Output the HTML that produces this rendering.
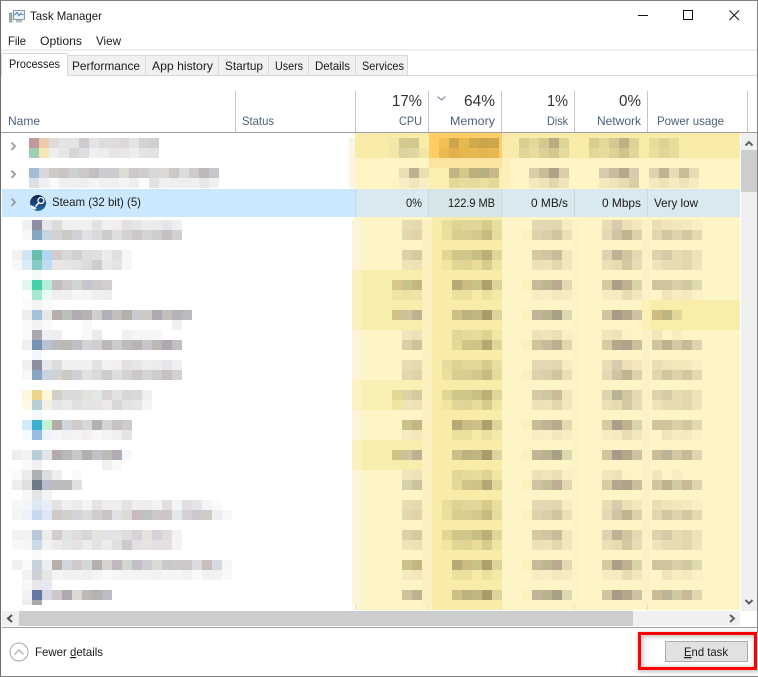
<!DOCTYPE html>
<html><head><meta charset="utf-8"><style>
html,body{margin:0;padding:0;background:#fff;overflow:hidden}
svg{display:block;font-family:"Liberation Sans",sans-serif;font-size:12px}
g.m rect{width:10px;height:10px}
.h{fill:#4c607a}
.r{text-anchor:end}
.b{font-size:16px;fill:#333;text-anchor:end}
.k{fill:#1a1a1a}
</style></head><body>
<svg width="758" height="677" viewBox="0 0 758 677" xmlns="http://www.w3.org/2000/svg">
<defs>
<filter id="bl" x="-10%" y="-30%" width="120%" height="160%"><feGaussianBlur stdDeviation="2.5"/></filter>
<linearGradient id="st" x1="0" y1="0" x2="0" y2="1"><stop offset="0" stop-color="#11224c"/><stop offset=".55" stop-color="#1a4a80"/><stop offset="1" stop-color="#1f6ea6"/></linearGradient>
<g id="L1" class="m">
<rect x="22" fill="#f0f0f3"/><rect x="32" fill="#8c8fa1"/><rect x="42" fill="#e6e7ea"/><rect x="52" fill="#dcdcdc"/><rect x="62" fill="#f1f0ee"/><rect x="72" fill="#f0f0ee"/><rect x="82" fill="#f0f0ee"/><rect x="92" fill="#e2e2e6"/><rect x="102" fill="#f2f0f0"/><rect x="112" fill="#f0eeee"/><rect x="122" fill="#e5e0df"/><rect x="132" fill="#e6e6ea"/><rect x="142" fill="#eeecec"/><rect x="152" fill="#ecebeb"/><rect x="162" fill="#e8e5ea"/><rect x="172" fill="#efefef"/>
<rect x="22" y="10" fill="#f6f7f9"/><rect x="32" y="10" fill="#86a6c2"/><rect x="42" y="10" fill="#c8d5e0"/><rect x="52" y="10" fill="#d2d2d2"/><rect x="62" y="10" fill="#c9c9c5"/><rect x="72" y="10" fill="#d2d0d6"/><rect x="82" y="10" fill="#e2e0e2"/><rect x="92" y="10" fill="#dcd9dd"/><rect x="102" y="10" fill="#ccccca"/><rect x="112" y="10" fill="#e0dde1"/><rect x="122" y="10" fill="#d4d3d3"/><rect x="132" y="10" fill="#ccc8c9"/><rect x="142" y="10" fill="#d6d3d4"/><rect x="152" y="10" fill="#cfcdca"/><rect x="162" y="10" fill="#c6c0c4"/><rect x="172" y="10" fill="#d2d0d5"/>
</g>
<g id="A" class="m">
<rect x="402" fill="#e8ddb0"/><rect x="412" fill="#e4dab0"/><rect x="442" fill="#e8dc9e"/><rect x="452" fill="#dfd394"/><rect x="462" fill="#e2d698"/><rect x="472" fill="#e2d698"/><rect x="482" fill="#d8cc88"/><rect x="492" fill="#e8dea0"/><rect x="532" fill="#e2d8b4"/><rect x="542" fill="#e0d9b2"/><rect x="552" fill="#e2d6ac"/><rect x="562" fill="#f4edc0"/><rect x="602" fill="#e8deb4"/><rect x="612" fill="#d8ccac"/><rect x="622" fill="#eee0b4"/><rect x="632" fill="#f2e8bc"/><rect x="652" fill="#eadfb4"/><rect x="662" fill="#efe5b6"/><rect x="672" fill="#f2e7b8"/><rect x="682" fill="#f2e9bc"/><rect x="692" fill="#f8efc4"/>
<rect x="402" y="10" fill="#e2d8ae"/><rect x="412" y="10" fill="#dfd3a8"/><rect x="442" y="10" fill="#eadf9c"/><rect x="452" y="10" fill="#d9cd90"/><rect x="462" y="10" fill="#d8cc90"/><rect x="472" y="10" fill="#d4c98c"/><rect x="482" y="10" fill="#c6bb80"/><rect x="492" y="10" fill="#e6dc9c"/><rect x="522" y="10" fill="#fdf0c0"/><rect x="532" y="10" fill="#dcd2ac"/><rect x="542" y="10" fill="#d8d1a8"/><rect x="552" y="10" fill="#cfc59f"/><rect x="562" y="10" fill="#eae0b4"/><rect x="602" y="10" fill="#e2dab0"/><rect x="612" y="10" fill="#cfc3a4"/><rect x="622" y="10" fill="#c1b591"/><rect x="632" y="10" fill="#dad2a8"/><rect x="652" y="10" fill="#e4d6ac"/><rect x="662" y="10" fill="#d0c7a0"/><rect x="672" y="10" fill="#dcd4ac"/><rect x="682" y="10" fill="#d4c89f"/><rect x="692" y="10" fill="#e2dab0"/>
</g>
<g id="B" class="m">
<rect x="402" fill="#dcd2a8"/><rect x="412" fill="#d4cba0"/><rect x="442" fill="#e2d694"/><rect x="452" fill="#cfc68a"/><rect x="462" fill="#cfc68a"/><rect x="472" fill="#c8bf84"/><rect x="482" fill="#bcb078"/><rect x="492" fill="#e0d698"/><rect x="532" fill="#d4caa4"/><rect x="542" fill="#cdc8a0"/><rect x="552" fill="#c8bd98"/><rect x="562" fill="#eee6ba"/><rect x="602" fill="#dcd4ac"/><rect x="612" fill="#bcb294"/><rect x="622" fill="#d2c6a0"/><rect x="632" fill="#e2dab0"/><rect x="652" fill="#ded2ac"/><rect x="662" fill="#d4caa4"/><rect x="672" fill="#e6dcb2"/><rect x="682" fill="#e2d8ae"/><rect x="692" fill="#ece4b8"/>
<rect x="402" y="10" fill="#eee4b6"/><rect x="412" y="10" fill="#ece2b4"/><rect x="442" y="10" fill="#f2e69e"/><rect x="452" y="10" fill="#e2d696"/><rect x="462" y="10" fill="#e0d494"/><rect x="472" y="10" fill="#e8dc98"/><rect x="482" y="10" fill="#d6cc8c"/><rect x="492" y="10" fill="#f0e6a4"/><rect x="532" y="10" fill="#ece2b8"/><rect x="542" y="10" fill="#eae4b6"/><rect x="552" y="10" fill="#e2d8ae"/><rect x="562" y="10" fill="#f0e8bc"/><rect x="602" y="10" fill="#eae2b6"/><rect x="612" y="10" fill="#e6dcb2"/><rect x="622" y="10" fill="#d4c8a2"/><rect x="632" y="10" fill="#e4dcb2"/><rect x="652" y="10" fill="#eee4b8"/><rect x="662" y="10" fill="#e6dcb2"/><rect x="672" y="10" fill="#e6dcb2"/><rect x="682" y="10" fill="#e2d8ae"/><rect x="692" y="10" fill="#eee6ba"/>
</g>
<g id="C" class="m">
<rect x="402" fill="#c8c28c"/><rect x="412" fill="#c4b680"/><rect x="452" fill="#b8aa74"/><rect x="462" fill="#ccbc84"/><rect x="472" fill="#ccc288"/><rect x="482" fill="#aca06c"/><rect x="492" fill="#dcd498"/><rect x="522" fill="#fcf0bc"/><rect x="532" fill="#c8bb98"/><rect x="542" fill="#bcb690"/><rect x="552" fill="#b8aa8c"/><rect x="562" fill="#e2dab0"/><rect x="602" fill="#d4cca0"/><rect x="612" fill="#ac9e88"/><rect x="622" fill="#c0b290"/><rect x="632" fill="#dad2a8"/><rect x="652" fill="#d0c49c"/><rect x="662" fill="#d0c49c"/><rect x="672" fill="#dad0a8"/><rect x="682" fill="#d2c8a0"/><rect x="692" fill="#e0d8ae"/>
<rect x="402" y="10" fill="#f4ecc0"/><rect x="412" y="10" fill="#f2e8bc"/><rect x="452" y="10" fill="#ece09e"/><rect x="462" y="10" fill="#ece09e"/><rect x="472" y="10" fill="#f6eaa6"/><rect x="482" y="10" fill="#eae0a0"/><rect x="492" y="10" fill="#f2e8a8"/><rect x="532" y="10" fill="#f6eec2"/><rect x="542" y="10" fill="#f8f0c4"/><rect x="552" y="10" fill="#f2e8bc"/><rect x="562" y="10" fill="#f6ecc0"/><rect x="602" y="10" fill="#f6eec2"/><rect x="612" y="10" fill="#f4ecc0"/><rect x="622" y="10" fill="#e8dcb2"/><rect x="632" y="10" fill="#f0e8bc"/><rect x="662" y="10" fill="#f0e4ba"/><rect x="672" y="10" fill="#f6ecc0"/><rect x="682" y="10" fill="#f4eabe"/><rect x="692" y="10" fill="#faf2c6"/>
</g>
<g id="D2" class="m">
<rect x="402" fill="#ccc29c"/><rect x="412" fill="#bcb290"/><rect x="452" fill="#ccc088"/><rect x="462" fill="#bcb27c"/><rect x="472" fill="#c0b684"/><rect x="482" fill="#a89c6c"/><rect x="492" fill="#dcd49c"/><rect x="522" fill="#fcf0bc"/><rect x="532" fill="#c2b496"/><rect x="542" fill="#b8b290"/><rect x="552" fill="#ac9f88"/><rect x="562" fill="#dedab0"/><rect x="602" fill="#cec69c"/><rect x="612" fill="#a89c88"/><rect x="622" fill="#b4a888"/><rect x="632" fill="#cac2a0"/>
</g>
<g id="P5" class="m"><rect x="652" fill="#ccbc98"/><rect x="662" fill="#bcb494"/><rect x="672" fill="#d0c8a0"/><rect x="682" fill="#c8ba98"/><rect x="692" fill="#ded6ae"/></g>
<g id="E" class="m">
<rect x="402" fill="#f0e6bc"/><rect x="412" fill="#ece2b8"/><rect x="452" fill="#e2d696"/><rect x="462" fill="#e6da9a"/><rect x="472" fill="#e6dc9c"/><rect x="482" fill="#e0d290"/><rect x="492" fill="#f2e6a4"/><rect x="532" fill="#ece2b8"/><rect x="542" fill="#eee6ba"/><rect x="552" fill="#eae0b4"/><rect x="562" fill="#f8f0c4"/><rect x="602" fill="#f0e8bc"/><rect x="612" fill="#ece4b8"/><rect x="622" fill="#fcf2c6"/><rect x="652" fill="#f0e8bc"/><rect x="672" fill="#f6eec0"/>
<rect x="402" y="10" fill="#d8d0a8"/><rect x="412" y="10" fill="#ccc29c"/><rect x="452" y="10" fill="#e4da98"/><rect x="462" y="10" fill="#d2c488"/><rect x="472" y="10" fill="#cec486"/><rect x="482" y="10" fill="#b4a874"/><rect x="492" y="10" fill="#e0d698"/><rect x="522" y="10" fill="#fcf0bc"/><rect x="532" y="10" fill="#cec4a0"/><rect x="542" y="10" fill="#c4be98"/><rect x="552" y="10" fill="#bcae90"/><rect x="562" y="10" fill="#e0d8ae"/><rect x="602" y="10" fill="#d6cea2"/><rect x="612" y="10" fill="#b4a88c"/><rect x="622" y="10" fill="#b0a488"/><rect x="632" y="10" fill="#c8c09a"/><rect x="652" y="10" fill="#d2c49e"/><rect x="662" y="10" fill="#bcb28e"/><rect x="672" y="10" fill="#d2caa2"/><rect x="682" y="10" fill="#c8ba96"/><rect x="692" y="10" fill="#dcd4ac"/>
</g>
</defs>

<rect x="0" y="0" width="758" height="677" fill="#fff"/>

<!-- title -->
<g>
<rect x="13.500" y="10.500" width="11" height="9" fill="#e8f0f8" stroke="#8c9aa4"/>
<polyline points="14.500,15 17,12.500 19,15.500 21,13.500 23.500,15" fill="none" stroke="#3a7ab0" stroke-width="1"/>
<rect x="9.500" y="13" width="2.500" height="9" fill="#9fb0a0" stroke="#7a8a80" stroke-width=".6"/>
<rect x="16" y="20" width="6" height="2.500" fill="#b8bcc0"/>
</g>
<text x="30" y="20" fill="#1a1a1a" textLength="72" lengthAdjust="spacingAndGlyphs">Task Manager</text>
<rect x="638" y="15" width="10" height="1" fill="#111"/>
<rect x="683.500" y="10.500" width="9" height="9" fill="none" stroke="#111"/>
<path d="M729.500 10.500L739 20M739 10.500L729.500 20" stroke="#111" fill="none" stroke-width="1"/>

<!-- menu -->
<text x="8" y="45" class="k" textLength="18" lengthAdjust="spacingAndGlyphs">File</text><text x="40" y="45" class="k" textLength="42" lengthAdjust="spacingAndGlyphs">Options</text><text x="96" y="45" class="k" textLength="25" lengthAdjust="spacingAndGlyphs">View</text>
<rect x="1" y="49" width="756" height="2" fill="#f0f0f0"/>

<!-- tabs -->
<rect x="1" y="75" width="756" height="1" fill="#d9d9d9"/>
<g fill="#f0f0f0" stroke="#d9d9d9">
<rect x="67.500" y="55.500" width="78" height="20"/><rect x="145.500" y="55.500" width="73" height="20"/><rect x="218.500" y="55.500" width="50" height="20"/><rect x="268.500" y="55.500" width="40" height="20"/><rect x="308.500" y="55.500" width="47" height="20"/><rect x="355.500" y="55.500" width="52" height="20"/>
</g>
<path d="M1.500 76V53.500H67.500V76" fill="#fff" stroke="#d9d9d9"/>
<rect x="2" y="75" width="65" height="2" fill="#fff"/>
<text x="9" y="68" class="k" textLength="51" lengthAdjust="spacingAndGlyphs">Processes</text>
<g class="k"><text x="72" y="70" textLength="68" lengthAdjust="spacingAndGlyphs">Performance</text><text x="152" y="70" textLength="61" lengthAdjust="spacingAndGlyphs">App history</text><text x="225" y="70" textLength="38" lengthAdjust="spacingAndGlyphs">Startup</text><text x="275" y="70" textLength="28" lengthAdjust="spacingAndGlyphs">Users</text><text x="315" y="70" textLength="35" lengthAdjust="spacingAndGlyphs">Details</text><text x="362" y="70" textLength="42" lengthAdjust="spacingAndGlyphs">Services</text></g>

<!-- header -->
<rect x="1" y="132" width="756" height="1" fill="#a0a0a0"/>
<g fill="#c6c6c6"><rect x="235" y="91" width="1" height="41"/><rect x="355" y="91" width="1" height="41"/><rect x="428" y="91" width="1" height="41"/><rect x="501" y="91" width="1" height="41"/><rect x="574" y="91" width="1" height="41"/><rect x="647" y="91" width="1" height="41"/><rect x="747" y="91" width="1" height="41"/></g>
<text x="392" y="106" style="font-size:16px;fill:#333" textLength="30" lengthAdjust="spacingAndGlyphs">17%</text><text x="464" y="106" style="font-size:16px;fill:#333" textLength="31" lengthAdjust="spacingAndGlyphs">64%</text><text x="547" y="106" style="font-size:16px;fill:#333" textLength="21" lengthAdjust="spacingAndGlyphs">1%</text><text x="619" y="106" style="font-size:16px;fill:#333" textLength="22" lengthAdjust="spacingAndGlyphs">0%</text>
<path d="M437.500 96.500L441.500 100L445.500 96.500" fill="none" stroke="#6a7a90" stroke-width="1"/>
<text x="8" y="125" class="h" textLength="32" lengthAdjust="spacingAndGlyphs">Name</text><text x="242" y="125" class="h" textLength="32" lengthAdjust="spacingAndGlyphs">Status</text>
<text x="399" y="125" class="h" textLength="23" lengthAdjust="spacingAndGlyphs">CPU</text><text x="450" y="125" class="h" textLength="45" lengthAdjust="spacingAndGlyphs">Memory</text><text x="547" y="125" class="h" textLength="21" lengthAdjust="spacingAndGlyphs">Disk</text><text x="597" y="125" class="h" textLength="44" lengthAdjust="spacingAndGlyphs">Network</text><text x="657" y="125" class="h" textLength="67" lengthAdjust="spacingAndGlyphs">Power usage</text>

<!-- yellow columns -->
<rect x="349" y="138" width="10" height="50" fill="#faf4e0"/>
<rect x="355" y="133" width="385" height="56" fill="#fef4c4"/>
<rect x="355" y="133" width="385" height="25" fill="#f8eca8"/>
<rect x="429" y="133" width="73" height="25" fill="#fece64"/>
<rect x="429" y="158" width="73" height="31" fill="#faeeb0"/>
<rect x="429" y="158" width="73" height="10" fill="#fae4a0"/>
<rect x="502" y="133" width="8" height="55" fill="#fbeab0" opacity=".5"/>

<rect x="352" y="220" width="388" height="385" fill="#fef5c6"/>
<rect x="355" y="605" width="385" height="5" fill="#fef5c6"/>
<rect x="352" y="220" width="10" height="385" fill="#fdf3d6"/>
<rect x="355" y="217" width="385" height="3" fill="#fef5c6"/>
<rect x="362" y="270" width="67" height="60" fill="#f8eeac"/>
<rect x="352" y="270" width="10" height="60" fill="#faf0c0"/>
<rect x="362" y="380" width="67" height="30" fill="#f9f0b4"/>
<rect x="352" y="380" width="10" height="30" fill="#fbf2c4"/>
<rect x="362" y="440" width="67" height="30" fill="#f8eeac"/>
<rect x="352" y="440" width="10" height="30" fill="#faf0c0"/>
<rect x="422" y="220" width="10" height="385" fill="#fcf0c0"/>
<rect x="432" y="217" width="70" height="393" fill="#f8eca8"/>
<rect x="572" y="220" width="8" height="385" fill="#fdf2c6"/>
<rect x="642" y="220" width="8" height="385" fill="#fcf1c6"/>
<rect x="650" y="300" width="90" height="30" fill="#f9edaa"/>
<rect x="642" y="300" width="8" height="30" fill="#faf0b8"/>
<g fill="#e6ddb0"><rect x="355" y="605" width="1" height="5"/><rect x="428" y="605" width="1" height="5"/><rect x="501" y="605" width="1" height="5"/><rect x="574" y="605" width="1" height="5"/><rect x="647" y="605" width="1" height="5"/></g>

<!-- right mosaics -->
<use href="#A" y="220"/><use href="#B" y="250"/><use href="#C" y="280"/><use href="#D2" y="310"/><use href="#E" y="330"/>
<use href="#A" y="360"/><use href="#B" y="390"/><use href="#C" y="420"/><use href="#D2" y="450"/><use href="#P5" y="450"/><use href="#E" y="470"/>
<use href="#A" y="500"/><use href="#B" y="530"/><use href="#C" y="560"/><use href="#D2" y="590"/><use href="#P5" y="590"/>
<g class="m">
<rect x="392" y="280" fill="#d8c88a"/><rect x="392" y="290" fill="#f0e4a4"/><rect x="402" y="290" fill="#ece2a4"/><rect x="412" y="290" fill="#ece4a8"/>
<rect x="392" y="310" fill="#d2c288"/>
<rect x="652" y="310" fill="#cebc84"/><rect x="662" y="310" fill="#bfb580"/><rect x="672" y="310" fill="#e0d698"/>
<rect x="392" y="390" fill="#e4d896"/><rect x="392" y="400" fill="#f0e4a2"/>
<rect x="392" y="450" fill="#d2c288"/>
</g>

<!-- top right mosaic -->
<g class="m">
<rect x="389" y="138" fill="#f2e7a6"/><rect x="399" y="138" fill="#d4c98f"/><rect x="409" y="138" fill="#d0c88c"/>
<rect x="389" y="148" fill="#f2e7a6"/><rect x="399" y="148" fill="#ddd29e"/><rect x="409" y="148" fill="#e0d6a0"/><rect x="419" y="148" fill="#f0e6a6"/>
<rect x="439" y="138" fill="#f0bf56"/><rect x="449" y="138" fill="#cda54c"/><rect x="459" y="138" fill="#e8b84f"/><rect x="469" y="138" fill="#d2a84e"/><rect x="479" y="138" fill="#cca44b"/><rect x="489" y="138" fill="#cea64c"/>
<rect x="439" y="148" fill="#ecba52"/><rect x="449" y="148" fill="#e4b04b"/><rect x="459" y="148" fill="#e6b64f"/><rect x="469" y="148" fill="#e8b854"/><rect x="479" y="148" fill="#e4b452"/><rect x="489" y="148" fill="#e8b854"/>
<rect x="519" y="138" fill="#d8ce90"/><rect x="529" y="138" fill="#e2d898"/><rect x="539" y="138" fill="#d4c88e"/><rect x="549" y="138" fill="#b8ac80"/><rect x="559" y="138" fill="#dcd494"/>
<rect x="519" y="148" fill="#e0d698"/><rect x="529" y="148" fill="#e6dc9c"/><rect x="539" y="148" fill="#dcd098"/><rect x="549" y="148" fill="#d4c890"/><rect x="559" y="148" fill="#e4dc9c"/>
<rect x="589" y="138" fill="#d8ce90"/><rect x="599" y="138" fill="#e2d898"/><rect x="609" y="138" fill="#d4c88e"/><rect x="619" y="138" fill="#bcb084"/><rect x="629" y="138" fill="#dcd494"/>
<rect x="589" y="148" fill="#e2d898"/><rect x="599" y="148" fill="#e6dc9c"/><rect x="609" y="148" fill="#dcd294"/><rect x="619" y="148" fill="#cfc48c"/><rect x="629" y="148" fill="#e0d698"/>
<rect x="649" y="138" fill="#e6dc9c"/><rect x="659" y="138" fill="#dcd296"/><rect x="669" y="138" fill="#e6dc9c"/>
<rect x="649" y="148" fill="#ecdf9e"/><rect x="659" y="148" fill="#e0d698"/><rect x="669" y="148" fill="#e6dc9c"/>
<rect x="399" y="168" fill="#e8e0b4"/><rect x="409" y="168" fill="#bdb28f"/><rect x="419" y="168" fill="#eadfb0"/>
<rect x="399" y="178" fill="#f6eec4"/><rect x="409" y="178" fill="#efe6bc"/><rect x="419" y="178" fill="#f6eec4"/>
<rect x="449" y="168" fill="#c2b480"/><rect x="459" y="168" fill="#d4c98a"/><rect x="469" y="168" fill="#c0b080"/><rect x="479" y="168" fill="#b4b080"/><rect x="489" y="168" fill="#c6ba88"/>
<rect x="449" y="178" fill="#e2d898"/><rect x="459" y="178" fill="#e6dc9c"/><rect x="469" y="178" fill="#e4da9a"/><rect x="479" y="178" fill="#eadf9f"/><rect x="489" y="178" fill="#e2d898"/>
<rect x="529" y="168" fill="#d8d0a8"/><rect x="539" y="168" fill="#c8bd98"/><rect x="549" y="168" fill="#b0a088"/><rect x="559" y="168" fill="#d8d0a8"/>
<rect x="529" y="178" fill="#f2eabc"/><rect x="539" y="178" fill="#eee4b8"/><rect x="549" y="178" fill="#e2d8ae"/><rect x="559" y="178" fill="#eee6ba"/>
<rect x="599" y="168" fill="#d4ccac"/><rect x="609" y="168" fill="#c8bd9c"/><rect x="619" y="168" fill="#b4a888"/><rect x="629" y="168" fill="#d4ccac"/>
<rect x="599" y="178" fill="#f2eabc"/><rect x="609" y="178" fill="#eee4b8"/><rect x="619" y="178" fill="#e6dcb2"/><rect x="629" y="178" fill="#d8ceaa"/>
<rect x="649" y="168" fill="#dcd4b0"/><rect x="659" y="168" fill="#c0b490"/><rect x="669" y="168" fill="#e4dcb4"/><rect x="679" y="168" fill="#c8bc98"/><rect x="689" y="168" fill="#e4dcb4"/>
<rect x="649" y="178" fill="#f2eabe"/><rect x="659" y="178" fill="#eee4b8"/><rect x="669" y="178" fill="#f4ecc0"/><rect x="679" y="178" fill="#eee4b8"/><rect x="689" y="178" fill="#f4ecc0"/>
</g>

<!-- left mosaics -->
<g class="m">
<rect x="29" y="138" fill="#c09a9a"/><rect x="39" y="138" fill="#eccbaa"/><rect x="49" y="138" fill="#e0dcdc"/><rect x="59" y="138" fill="#e4e4e4"/><rect x="69" y="138" fill="#e4e4e4"/><rect x="79" y="138" fill="#d0cace"/><rect x="89" y="138" fill="#e4e4e6"/><rect x="99" y="138" fill="#dcdcdc"/><rect x="109" y="138" fill="#dedcde"/><rect x="119" y="138" fill="#dcd8da"/><rect x="129" y="138" fill="#e2e3e5"/><rect x="139" y="138" fill="#d4d3d3"/><rect x="149" y="138" fill="#d0d1cf"/>
<rect x="29" y="148" fill="#a0cfb4"/><rect x="39" y="148" fill="#f4e8b4"/><rect x="49" y="148" fill="#eeeeee"/><rect x="59" y="148" fill="#e6e6e6"/><rect x="69" y="148" fill="#d8d6d4"/><rect x="79" y="148" fill="#dedde2"/><rect x="89" y="148" fill="#efefef"/><rect x="99" y="148" fill="#ededed"/><rect x="109" y="148" fill="#e6e4e6"/><rect x="119" y="148" fill="#e8e6e8"/><rect x="129" y="148" fill="#ecedef"/><rect x="139" y="148" fill="#e4e4e4"/><rect x="149" y="148" fill="#e2e2e2"/>
<rect x="29" y="168" fill="#a4bcd4"/><rect x="39" y="168" fill="#d8d8da"/><rect x="49" y="168" fill="#cecac8"/><rect x="59" y="168" fill="#ccc4c4"/><rect x="69" y="168" fill="#cdcfd2"/><rect x="79" y="168" fill="#cac8c8"/><rect x="89" y="168" fill="#c4bec2"/><rect x="99" y="168" fill="#cccdd2"/><rect x="109" y="168" fill="#cecacd"/><rect x="119" y="168" fill="#dcdcd6"/><rect x="129" y="168" fill="#ccc8ca"/><rect x="139" y="168" fill="#d0cccc"/><rect x="149" y="168" fill="#d8d8dc"/><rect x="159" y="168" fill="#dcd8d6"/><rect x="169" y="168" fill="#ccc8ca"/><rect x="179" y="168" fill="#dadcde"/><rect x="189" y="168" fill="#d0cccc"/><rect x="199" y="168" fill="#bcb8ba"/><rect x="209" y="168" fill="#c8c6cc"/>
<rect x="29" y="178" fill="#dae0e8"/><rect x="39" y="178" fill="#efefef"/><rect x="49" y="178" fill="#fafafa"/><rect x="59" y="178" fill="#f0f0f0"/><rect x="69" y="178" fill="#f0f0f0"/><rect x="79" y="178" fill="#eeeeee"/><rect x="89" y="178" fill="#f4f4f4"/><rect x="99" y="178" fill="#f0f0f0"/><rect x="109" y="178" fill="#f0f0f0"/><rect x="119" y="178" fill="#f4f4f4"/><rect x="129" y="178" fill="#eeeeee"/><rect x="139" y="178" fill="#fafafa"/><rect x="149" y="178" fill="#e2e2e2"/><rect x="159" y="178" fill="#f0f0ee"/><rect x="169" y="178" fill="#eeeeee"/><rect x="179" y="178" fill="#eeeeee"/><rect x="189" y="178" fill="#efefef"/><rect x="199" y="178" fill="#e8e8e8"/><rect x="209" y="178" fill="#f0f0f0"/>
</g>
<use href="#L1" y="220"/><use href="#L1" y="360"/>
<g class="m">
<rect x="12" y="250" fill="#f2f2f2"/><rect x="22" y="250" fill="#d0e4f4"/><rect x="32" y="250" fill="#68bfae"/><rect x="42" y="250" fill="#b0d6f0"/><rect x="52" y="250" fill="#d2ccca"/><rect x="62" y="250" fill="#d8d8d8"/><rect x="72" y="250" fill="#d0d0d0"/><rect x="82" y="250" fill="#dcdde0"/><rect x="92" y="250" fill="#e4dfdf"/><rect x="102" y="250" fill="#ececec"/><rect x="112" y="250" fill="#e0dfdf"/><rect x="122" y="250" fill="#f6f7fb"/>
<rect x="12" y="260" fill="#f8f8f8"/><rect x="22" y="260" fill="#dcebf6"/><rect x="32" y="260" fill="#86cbc8"/><rect x="42" y="260" fill="#c0dcf2"/><rect x="52" y="260" fill="#e8e6e6"/><rect x="62" y="260" fill="#e8e4e6"/><rect x="72" y="260" fill="#e2e2e2"/><rect x="82" y="260" fill="#dcdbda"/><rect x="92" y="260" fill="#d0ccce"/><rect x="102" y="260" fill="#e8e8ec"/><rect x="112" y="260" fill="#e4e4e4"/><rect x="122" y="260" fill="#f6f7fb"/>
<rect x="32" y="270" fill="#f2fafa"/>
<rect x="22" y="280" fill="#e2f5ef"/><rect x="32" y="280" fill="#46d0aa"/><rect x="42" y="280" fill="#b8ecdc"/><rect x="52" y="280" fill="#c6bebe"/><rect x="62" y="280" fill="#cecacc"/><rect x="72" y="280" fill="#d2d4d0"/><rect x="82" y="280" fill="#c8c4cc"/><rect x="92" y="280" fill="#cec9cb"/><rect x="102" y="280" fill="#d0cfce"/>
<rect x="22" y="290" fill="#fafefe"/><rect x="32" y="290" fill="#a8e8d2"/><rect x="42" y="290" fill="#ecfaf5"/><rect x="52" y="290" fill="#f0eeee"/><rect x="62" y="290" fill="#f1f0f0"/><rect x="72" y="290" fill="#f6f6f6"/><rect x="82" y="290" fill="#f5f4f5"/><rect x="92" y="290" fill="#f1f0f0"/><rect x="102" y="290" fill="#eeeeee"/>
<rect x="22" y="300" fill="#fafafa"/><rect x="32" y="300" fill="#f2f3f2"/><rect x="42" y="300" fill="#fafafa"/>
<rect x="22" y="310" fill="#eeeeee"/><rect x="32" y="310" fill="#a5c0d8"/><rect x="42" y="310" fill="#e6e8e8"/><rect x="52" y="310" fill="#b5aeac"/><rect x="62" y="310" fill="#bcc0ba"/><rect x="72" y="310" fill="#b0acb0"/><rect x="82" y="310" fill="#b8b2b6"/><rect x="92" y="310" fill="#d0cecb"/><rect x="102" y="310" fill="#b2b0b6"/><rect x="112" y="310" fill="#c2bebc"/><rect x="122" y="310" fill="#b4b0ae"/><rect x="132" y="310" fill="#c8c9cc"/><rect x="142" y="310" fill="#ccc9c7"/><rect x="152" y="310" fill="#acaab0"/><rect x="162" y="310" fill="#c2bfbc"/><rect x="172" y="310" fill="#b4b4b8"/><rect x="182" y="310" fill="#bcbabe"/>
<rect x="22" y="320" fill="#fafafa"/><rect x="32" y="320" fill="#f2f2f2"/><rect x="42" y="320" fill="#fafafa"/><rect x="82" y="320" fill="#f8f8f8"/><rect x="172" y="320" fill="#f0f0f0"/>
<rect x="22" y="330" fill="#fafafa"/><rect x="32" y="330" fill="#a8a9b0"/><rect x="42" y="330" fill="#f0f0f2"/><rect x="52" y="330" fill="#eeeeee"/><rect x="82" y="330" fill="#f8f8f6"/><rect x="92" y="330" fill="#eaeaea"/><rect x="122" y="330" fill="#f2f0ee"/><rect x="132" y="330" fill="#f4f5f6"/><rect x="142" y="330" fill="#f6f6f6"/><rect x="152" y="330" fill="#f6f6f6"/>
<rect x="22" y="340" fill="#eeeff3"/><rect x="32" y="340" fill="#7393b0"/><rect x="42" y="340" fill="#b8c4d4"/><rect x="52" y="340" fill="#bbbbbb"/><rect x="62" y="340" fill="#bab8b2"/><rect x="72" y="340" fill="#c0bec4"/><rect x="82" y="340" fill="#d6d3d6"/><rect x="92" y="340" fill="#d0ced2"/><rect x="102" y="340" fill="#bcb8b8"/><rect x="112" y="340" fill="#cccacc"/><rect x="122" y="340" fill="#bdbbbb"/><rect x="132" y="340" fill="#b8b4b4"/><rect x="142" y="340" fill="#c8c4c8"/><rect x="152" y="340" fill="#bcb9b5"/><rect x="162" y="340" fill="#b0a8b0"/><rect x="172" y="340" fill="#c0bec4"/>
<rect x="32" y="350" fill="#f2f6fa"/>
<rect x="22" y="390" fill="#fdf5dc"/><rect x="32" y="390" fill="#ead78c"/><rect x="42" y="390" fill="#fdf6dc"/><rect x="52" y="390" fill="#d2cec8"/><rect x="62" y="390" fill="#dadada"/><rect x="72" y="390" fill="#dcdad8"/><rect x="82" y="390" fill="#e2e2de"/><rect x="92" y="390" fill="#e4e8e8"/><rect x="102" y="390" fill="#d8d4d4"/><rect x="112" y="390" fill="#e2e2e2"/><rect x="122" y="390" fill="#dad6d6"/><rect x="132" y="390" fill="#dad8d8"/><rect x="142" y="390" fill="#eeeff0"/>
<rect x="22" y="400" fill="#fef8e6"/><rect x="32" y="400" fill="#b4ced2"/><rect x="42" y="400" fill="#f2f0e2"/><rect x="52" y="400" fill="#e6e6e6"/><rect x="62" y="400" fill="#ece8e8"/><rect x="72" y="400" fill="#e0e0e0"/><rect x="82" y="400" fill="#e4e4e6"/><rect x="92" y="400" fill="#e4e4e4"/><rect x="102" y="400" fill="#ece8e8"/><rect x="112" y="400" fill="#d8d8d8"/><rect x="122" y="400" fill="#e4e2e4"/><rect x="132" y="400" fill="#e6e6e6"/><rect x="142" y="400" fill="#f4f4f6"/>
<rect x="32" y="410" fill="#f2fafc"/>
<rect x="22" y="420" fill="#d6ebfa"/><rect x="32" y="420" fill="#3cb0d0"/><rect x="42" y="420" fill="#c6f2d0"/><rect x="52" y="420" fill="#b4acaa"/><rect x="62" y="420" fill="#d0d6dc"/><rect x="72" y="420" fill="#d0cccc"/><rect x="82" y="420" fill="#d4dadc"/><rect x="92" y="420" fill="#b4b2b0"/><rect x="102" y="420" fill="#d4d4d6"/><rect x="112" y="420" fill="#c8c2c4"/><rect x="122" y="420" fill="#cccccc"/>
<rect x="22" y="430" fill="#f5faff"/><rect x="32" y="430" fill="#98bce0"/><rect x="42" y="430" fill="#eef2fa"/><rect x="52" y="430" fill="#f6f4f4"/><rect x="62" y="430" fill="#f2f2f2"/><rect x="72" y="430" fill="#f4f2f2"/><rect x="82" y="430" fill="#f2efee"/><rect x="92" y="430" fill="#f6f6f6"/><rect x="102" y="430" fill="#f2f3f3"/><rect x="112" y="430" fill="#f0efee"/><rect x="122" y="430" fill="#e4e4e6"/>
<rect x="12" y="450" fill="#eeeeee"/><rect x="22" y="450" fill="#f3f4f2"/><rect x="32" y="450" fill="#b8ced8"/><rect x="42" y="450" fill="#e2e6ea"/><rect x="52" y="450" fill="#b4acac"/><rect x="62" y="450" fill="#b8b8b6"/><rect x="72" y="450" fill="#c8c6ca"/><rect x="82" y="450" fill="#b2b0ac"/><rect x="92" y="450" fill="#c4c0c8"/><rect x="102" y="450" fill="#bcbab6"/><rect x="112" y="450" fill="#b4aab4"/><rect x="122" y="450" fill="#f4f8fc"/>
<rect x="22" y="460" fill="#fafafa"/><rect x="32" y="460" fill="#f0f0f0"/><rect x="102" y="460" fill="#f2f0ee"/><rect x="112" y="460" fill="#f8faf8"/>
<rect x="12" y="470" fill="#fafafa"/><rect x="22" y="470" fill="#ebebed"/><rect x="32" y="470" fill="#acb0b4"/><rect x="42" y="470" fill="#dcdde0"/><rect x="52" y="470" fill="#eeeeee"/><rect x="72" y="470" fill="#fafafa"/>
<rect x="12" y="480" fill="#eeeeee"/><rect x="22" y="480" fill="#dfdfe0"/><rect x="32" y="480" fill="#6f7a88"/><rect x="42" y="480" fill="#b8bcc8"/><rect x="52" y="480" fill="#bcbcbc"/><rect x="62" y="480" fill="#bcbcbc"/><rect x="72" y="480" fill="#e0e0e2"/>
<rect x="22" y="490" fill="#f8f8f8"/><rect x="32" y="490" fill="#e4e4e6"/><rect x="42" y="490" fill="#f2f4f6"/>
<rect x="12" y="500" fill="#f6f6f6"/><rect x="22" y="500" fill="#f2f6fa"/><rect x="32" y="500" fill="#dce8f2"/><rect x="42" y="500" fill="#e6eef8"/><rect x="52" y="500" fill="#e2e2e2"/><rect x="62" y="500" fill="#f0f0f2"/><rect x="72" y="500" fill="#eeeceb"/><rect x="82" y="500" fill="#f4f5f7"/><rect x="92" y="500" fill="#e4e2e6"/><rect x="102" y="500" fill="#f0eeec"/><rect x="112" y="500" fill="#eeeeec"/><rect x="122" y="500" fill="#e6e2e4"/><rect x="132" y="500" fill="#f0eff0"/><rect x="142" y="500" fill="#eeeeee"/><rect x="152" y="500" fill="#f2f3f3"/><rect x="162" y="500" fill="#e2dee0"/><rect x="172" y="500" fill="#f2f4f5"/><rect x="182" y="500" fill="#e2dde0"/><rect x="192" y="500" fill="#e6e4e8"/><rect x="202" y="500" fill="#f4f4f4"/><rect x="212" y="500" fill="#fafafa"/>
<rect x="12" y="510" fill="#f4f4f4"/><rect x="22" y="510" fill="#eef2f6"/><rect x="32" y="510" fill="#c8d8ee"/><rect x="42" y="510" fill="#dfe6f4"/><rect x="52" y="510" fill="#ccc9c6"/><rect x="62" y="510" fill="#d2d0cd"/><rect x="72" y="510" fill="#d4d3d6"/><rect x="82" y="510" fill="#dadbde"/><rect x="92" y="510" fill="#d2cdcb"/><rect x="102" y="510" fill="#c8c4c6"/><rect x="112" y="510" fill="#e2e2e6"/><rect x="122" y="510" fill="#dcdad6"/><rect x="132" y="510" fill="#c6bcc0"/><rect x="142" y="510" fill="#c0c2c2"/><rect x="152" y="510" fill="#cec8cc"/><rect x="162" y="510" fill="#ccc6c8"/><rect x="172" y="510" fill="#e4e8ec"/><rect x="182" y="510" fill="#d4d0d4"/><rect x="192" y="510" fill="#ccc9ce"/><rect x="202" y="510" fill="#cecbc8"/><rect x="212" y="510" fill="#eeeef0"/><rect x="222" y="510" fill="#f6f7fa"/>
<rect x="12" y="530" fill="#f2f2f2"/><rect x="22" y="530" fill="#f2f2f2"/><rect x="32" y="530" fill="#b8c8d8"/><rect x="42" y="530" fill="#ececec"/><rect x="52" y="530" fill="#d2cccc"/><rect x="62" y="530" fill="#e0e2e4"/><rect x="72" y="530" fill="#e0dcda"/><rect x="82" y="530" fill="#d4d6dc"/><rect x="92" y="530" fill="#e6e4e0"/><rect x="102" y="530" fill="#e0e2e6"/><rect x="112" y="530" fill="#e4e4e4"/><rect x="122" y="530" fill="#dedcdc"/><rect x="132" y="530" fill="#d6d2d8"/><rect x="142" y="530" fill="#e4e2dc"/><rect x="152" y="530" fill="#d6d2d8"/><rect x="162" y="530" fill="#e0dce0"/><rect x="172" y="530" fill="#f4f4f6"/>
<rect x="12" y="540" fill="#f8f8f8"/><rect x="22" y="540" fill="#f6f6f6"/><rect x="32" y="540" fill="#ccdae8"/><rect x="42" y="540" fill="#f2f2f2"/><rect x="52" y="540" fill="#eeeaec"/><rect x="62" y="540" fill="#e4e6e4"/><rect x="72" y="540" fill="#e6e2e4"/><rect x="82" y="540" fill="#ececec"/><rect x="92" y="540" fill="#e4e2e6"/><rect x="102" y="540" fill="#ececec"/><rect x="112" y="540" fill="#e0dfdf"/><rect x="122" y="540" fill="#cec8cc"/><rect x="132" y="540" fill="#e2e0e4"/><rect x="142" y="540" fill="#e6e4e2"/><rect x="152" y="540" fill="#e4e0e2"/><rect x="162" y="540" fill="#e4e0e2"/><rect x="172" y="540" fill="#f4f4f4"/>
<rect x="32" y="550" fill="#fafafa"/>
<rect x="12" y="560" fill="#f0f0f0"/><rect x="22" y="560" fill="#fafafa"/><rect x="32" y="560" fill="#c8d0de"/><rect x="42" y="560" fill="#ecefee"/><rect x="52" y="560" fill="#b8aeac"/><rect x="62" y="560" fill="#d0d6dc"/><rect x="72" y="560" fill="#d0cacb"/><rect x="82" y="560" fill="#d2d8da"/><rect x="92" y="560" fill="#b4b0ae"/><rect x="102" y="560" fill="#d6d4d0"/><rect x="112" y="560" fill="#c0b8bc"/><rect x="122" y="560" fill="#d2d6d0"/><rect x="132" y="560" fill="#c4bec6"/><rect x="142" y="560" fill="#d0ccd0"/><rect x="152" y="560" fill="#dadad6"/><rect x="162" y="560" fill="#cac8cc"/><rect x="172" y="560" fill="#cccaca"/><rect x="182" y="560" fill="#ccc8c8"/><rect x="192" y="560" fill="#dcdce0"/><rect x="202" y="560" fill="#c8bebe"/><rect x="212" y="560" fill="#d4dade"/><rect x="222" y="560" fill="#f6f6f6"/>
<rect x="22" y="570" fill="#f2f2f2"/><rect x="32" y="570" fill="#d0d0d6"/><rect x="42" y="570" fill="#e4e8e2"/><rect x="52" y="570" fill="#f4f4f4"/><rect x="62" y="570" fill="#f2f2f2"/><rect x="72" y="570" fill="#f2f2f0"/><rect x="82" y="570" fill="#f0f0ee"/><rect x="92" y="570" fill="#f4f4f4"/><rect x="102" y="570" fill="#f8f9fb"/><rect x="112" y="570" fill="#f6f6f8"/><rect x="122" y="570" fill="#f4f4f6"/><rect x="132" y="570" fill="#f2f4f4"/><rect x="142" y="570" fill="#f4f4f4"/><rect x="152" y="570" fill="#f2f2f2"/><rect x="162" y="570" fill="#f6f6f4"/><rect x="172" y="570" fill="#f4f5f5"/><rect x="182" y="570" fill="#f2f2f2"/><rect x="192" y="570" fill="#f8f8fa"/><rect x="202" y="570" fill="#f2f2f2"/><rect x="212" y="570" fill="#f2f2f2"/><rect x="222" y="570" fill="#f8f8f8"/>
<rect x="22" y="580" fill="#f8f8f8"/><rect x="32" y="580" fill="#e8e8e8"/><rect x="42" y="580" fill="#e8e8f2"/>
<rect x="22" y="590" fill="#f2f2f2"/><rect x="32" y="590" fill="#6878a4"/><rect x="42" y="590" fill="#d8d8e4"/><rect x="52" y="590" fill="#ccc9c8"/><rect x="62" y="590" fill="#b0aab0"/><rect x="72" y="590" fill="#dcd8d8"/><rect x="82" y="590" fill="#bcb8b6"/><rect x="92" y="590" fill="#b4b2b4"/><rect x="102" y="590" fill="#bebbc4"/>
</g>
<rect x="22" y="600" width="10" height="5" fill="#eeeeee"/><rect x="32" y="600" width="10" height="5" fill="#aaaaaa"/>

<!-- steam row -->
<rect x="2" y="189" width="353" height="28" fill="#cce8ff"/>
<rect x="355" y="189" width="385" height="28" fill="#d8e9ef"/>
<rect x="429" y="189" width="72" height="28" fill="#d6e6e8"/>
<g fill="#c8d8dc"><rect x="355" y="189" width="1" height="28"/><rect x="428" y="189" width="1" height="28"/><rect x="501" y="189" width="1" height="28"/><rect x="574" y="189" width="1" height="28"/><rect x="647" y="189" width="1" height="28"/></g>
<circle cx="38" cy="203" r="8" fill="url(#st)"/>
<path d="M30.500 205L36 207.500Q37 209.500 34 209.500Q31 208.500 30.500 205Z" fill="#fff"/>
<circle cx="41" cy="200.500" r="3" fill="none" stroke="#fff" stroke-width="1.300"/>
<path d="M35.500 206.500L39 202.500" stroke="#fff" stroke-width="1.500"/>
<text x="52" y="206" class="k" textLength="89" lengthAdjust="spacingAndGlyphs">Steam (32 bit) (5)</text>
<g class="k"><text x="406" y="207" textLength="16" lengthAdjust="spacingAndGlyphs">0%</text><text x="448" y="207" textLength="47" lengthAdjust="spacingAndGlyphs">122.9 MB</text><text x="531" y="207" textLength="37" lengthAdjust="spacingAndGlyphs">0 MB/s</text><text x="602" y="207" textLength="39" lengthAdjust="spacingAndGlyphs">0 Mbps</text><text x="654" y="207" textLength="44" lengthAdjust="spacingAndGlyphs">Very low</text></g>

<!-- chevrons -->
<g fill="none" stroke="#a0a0a0" stroke-width="2">
<path d="M11.500 142.500L15 146.300L11.500 150"/><path d="M11.500 170.500L15 174.300L11.500 178"/><path d="M11.500 198.500L15 202.300L11.500 206"/>
</g>

<!-- vertical scrollbar -->
<rect x="740" y="133" width="1" height="478" fill="#fff"/>
<rect x="741" y="133" width="16" height="478" fill="#f0f0f0"/>
<rect x="741" y="150" width="16" height="42" fill="#cdcdcd"/>
<path d="M745.500 145.500L749 142L752.500 145.500" fill="none" stroke="#606060" stroke-width="2"/>
<path d="M745.500 600L749 603.500L752.500 600" fill="none" stroke="#606060" stroke-width="2"/>

<!-- horizontal scrollbar -->
<rect x="2" y="611" width="738" height="15" fill="#f0f0f0"/>
<rect x="19" y="611" width="614" height="15" fill="#cdcdcd"/>
<path d="M12 615L8 618.500L12 622" fill="none" stroke="#505050" stroke-width="2"/>
<path d="M730 615L734 618.500L730 622" fill="none" stroke="#606060" stroke-width="2"/>
<rect x="2" y="627" width="755" height="1" fill="#a0a0a0"/>

<!-- footer -->
<circle cx="19" cy="652" r="9" fill="none" stroke="#a8a8a8" stroke-width="1"/>
<path d="M14.500 654.500L19 650L23.500 654.500" fill="none" stroke="#a8a8a8" stroke-width="1.200"/>
<text x="35" y="656" class="k" textLength="68" lengthAdjust="spacingAndGlyphs">Fewer <tspan text-decoration="underline">d</tspan>etails</text>

<rect x="665.500" y="641.500" width="82" height="20" fill="#e1e1e1" stroke="#adadad"/>
<text x="684" y="656" class="k" textLength="44" lengthAdjust="spacingAndGlyphs"><tspan text-decoration="underline">E</tspan>nd task</text>
<rect x="640.500" y="634.500" width="116" height="35" fill="none" stroke="#777" stroke-width="4" opacity=".55" filter="url(#bl)"/>
<rect x="639.500" y="633.500" width="116" height="35" fill="none" stroke="#fe0000" stroke-width="3"/>

<!-- window border -->
<rect x="0" y="0" width="758" height="1" fill="#7f7f7f"/>
<rect x="0" y="0" width="1" height="677" fill="#6f6f6f"/>
<rect x="757" y="0" width="1" height="633" fill="#7f7f7f"/>
<rect x="0" y="676" width="758" height="1" fill="#7f7f7f"/>
</svg>
</body></html>
